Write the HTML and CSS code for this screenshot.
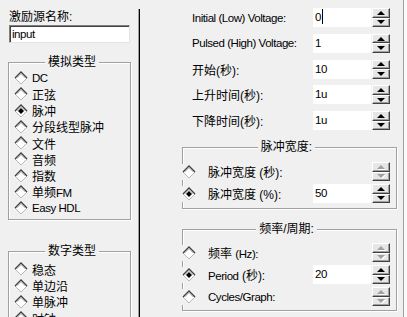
FILE: index.html
```html
<!DOCTYPE html>
<html lang="zh">
<head>
    <meta charset="UTF-8">
    <title>激励源</title>
    <link rel="stylesheet" href="styles.css">
</head>
<body>

    <!-- diamond radio glyphs, reused below -->
    <svg class="defs" width="0" height="0">
        <symbol id="dia" viewBox="0 0 14 14">
            <polygon points="7,1 13,7 7,13 1,7" fill="#fff" stroke="#b8b8b8" stroke-width="1"/>
            <polyline points="1,7 7,1 13,7" fill="none" stroke="#404040" stroke-width="1.4"/>
            <polyline points="2.6,7 7,2.6 11.4,7" fill="none" stroke="#909090" stroke-width="0.8"/>
        </symbol>
        <symbol id="dia-on" viewBox="0 0 14 14">
            <use href="#dia"/>
            <polygon points="7,4 10,7 7,10 4,7" fill="#000"/>
        </symbol>
    </svg>

    <div class="dialog">
        <!-- source type column -->
        <div class="left">
            <div class="name-label">激励源名称:</div>
            <div class="name-input"><span class="en">input</span></div>

            <fieldset class="group analog">
                <legend>模拟类型</legend>
                <div class="radio"><svg class="dia"><use href="#dia"/></svg><span class="en">DC</span></div>
                <div class="radio"><svg class="dia"><use href="#dia"/></svg><span>正弦</span></div>
                <div class="radio"><svg class="dia"><use href="#dia-on"/></svg><span>脉冲</span></div>
                <div class="radio"><svg class="dia"><use href="#dia"/></svg><span>分段线型脉冲</span></div>
                <div class="radio"><svg class="dia"><use href="#dia"/></svg><span>文件</span></div>
                <div class="radio"><svg class="dia"><use href="#dia"/></svg><span>音频</span></div>
                <div class="radio"><svg class="dia"><use href="#dia"/></svg><span>指数</span></div>
                <div class="radio"><svg class="dia"><use href="#dia"/></svg><span>单频<span class="en">FM</span></span></div>
                <div class="radio"><svg class="dia"><use href="#dia"/></svg><span class="en">Easy HDL</span></div>
            </fieldset>

            <fieldset class="group digital">
                <legend>数字类型</legend>
                <div class="radio"><svg class="dia"><use href="#dia"/></svg><span>稳态</span></div>
                <div class="radio"><svg class="dia"><use href="#dia"/></svg><span>单边沿</span></div>
                <div class="radio"><svg class="dia"><use href="#dia"/></svg><span>单脉冲</span></div>
                <div class="radio"><svg class="dia"><use href="#dia"/></svg><span>时钟</span></div>
            </fieldset>
        </div>

        <div class="divider"></div>

        <!-- pulse parameters -->
        <div class="right">
            <div class="params">
                <div class="param">
                    <span class="en">Initial (Low) Voltage:</span>
                    <div class="field"><span class="en">0</span><span class="caret"></span></div>
                    <div class="spin"><i class="up"></i><i class="down"></i></div>
                </div>
                <div class="param">
                    <span class="en">Pulsed (High) Voltage:</span>
                    <div class="field"><span class="en">1</span></div>
                    <div class="spin"><i class="up"></i><i class="down"></i></div>
                </div>
                <div class="param">
                    <span>开始(秒):</span>
                    <div class="field"><span class="en">10</span></div>
                    <div class="spin"><i class="up"></i><i class="down"></i></div>
                </div>
                <div class="param">
                    <span>上升时间(秒):</span>
                    <div class="field"><span class="en">1u</span></div>
                    <div class="spin"><i class="up"></i><i class="down"></i></div>
                </div>
                <div class="param">
                    <span>下降时间(秒):</span>
                    <div class="field"><span class="en">1u</span></div>
                    <div class="spin"><i class="up"></i><i class="down"></i></div>
                </div>
            </div>

            <fieldset class="box pulse">
                <legend>脉冲宽度:</legend>
                <div class="opt">
                    <div class="opt-label"><svg class="dia"><use href="#dia"/></svg><span>脉冲宽度 (秒):</span></div>
                    <div class="field off"></div>
                    <div class="spin off"><i class="up"></i><i class="down"></i></div>
                </div>
                <div class="opt">
                    <div class="opt-label"><svg class="dia"><use href="#dia-on"/></svg><span>脉冲宽度 (%):</span></div>
                    <div class="field"><span class="en">50</span></div>
                    <div class="spin"><i class="up"></i><i class="down"></i></div>
                </div>
            </fieldset>

            <fieldset class="box freq">
                <legend>频率/周期:</legend>
                <div class="opt">
                    <div class="opt-label"><svg class="dia"><use href="#dia"/></svg><span>频率 <span class="en">(Hz):</span></span></div>
                    <div class="field off"></div>
                    <div class="spin off"><i class="up"></i><i class="down"></i></div>
                </div>
                <div class="opt">
                    <div class="opt-label"><svg class="dia"><use href="#dia-on"/></svg><span><span class="en">Period</span> (秒):</span></div>
                    <div class="field"><span class="en">20</span></div>
                    <div class="spin"><i class="up"></i><i class="down"></i></div>
                </div>
                <div class="opt">
                    <div class="opt-label"><svg class="dia"><use href="#dia"/></svg><span class="en">Cycles/Graph:</span></div>
                    <div class="field off"></div>
                    <div class="spin off"><i class="up"></i><i class="down"></i></div>
                </div>
            </fieldset>
        </div>

        <div class="edge"></div>
    </div>

</body>
</html>
```

FILE: styles.css
```css
* {
    box-sizing: border-box;
}

body {
    margin: 0;
    background-color: #f0f0f0;
    font-family: "Liberation Sans", "Noto Sans CJK SC", sans-serif;
    font-size: 12px;
    color: #000;
}

.defs {
    display: block;
    width: 0;
    height: 0;
    overflow: hidden;
}

/* latin text is drawn narrower than the CJK text */
.en {
    font-size: 11.5px;
    letter-spacing: -0.45px;
}

.dialog {
    display: flex;
    width: 407px;
    height: 317px;
    overflow: hidden;
}

/* ---------- left column ---------- */
.left {
    flex: none;
    width: 138px;
    padding: 9px 0 0 8px;
}

.name-label {
    height: 16px;
    line-height: 16px;
    padding-left: 1px;
}

.name-input {
    width: 121px;
    height: 18px;
    margin-left: 1px;
    padding-left: 2px;
    line-height: 16px;
    background-color: #fff;
    border: 1px solid;
    border-color: #808080 #e3e3e3 #e3e3e3 #808080;
    box-shadow: inset 1px 1px 0 #404040;
}

fieldset {
    margin: 0;
    min-inline-size: 0;
    border: 1px solid #a0a0a0;
    box-shadow: inset 1px 1px 0 #fff, 1px 1px 0 #fff;
}

legend {
    margin: 0 auto;
    padding: 0 3px;
    line-height: 14px;
    background-color: #f0f0f0;
}

.group {
    width: 123px;
    padding: 1px 0 3px 5px;
}

.analog {
    margin-top: 12px;
}

.digital {
    margin-top: 24px;
    padding-top: 3px;
}

.radio {
    display: flex;
    align-items: center;
    gap: 4px;
    height: 16.25px;
    white-space: nowrap;
}

.dia {
    flex: none;
    width: 14px;
    height: 14px;
}

.divider {
    flex: none;
    width: 2px;
    margin-top: 9px;
    border-left: 1px solid #a0a0a0;
    border-right: 1px solid #000;
}

/* ---------- right column ---------- */
.right {
    flex: none;
    width: 264px;
    border-right: 1px solid #a0a0a0;
}

.edge {
    flex: 1;
    background-color: #fafafa;
}

.params {
    padding: 8px 0 0 52px;
}

.param {
    display: grid;
    grid-template-columns: 120px 58px 18px;
    column-gap: 1px;
    align-items: center;
    height: 19px;
    margin-bottom: 6.75px;
    white-space: nowrap;
}

.field {
    height: 19px;
    padding-left: 2px;
    line-height: 19px;
    background-color: #fff;
}

.field.off {
    background-color: transparent;
}

.caret {
    display: inline-block;
    width: 1px;
    height: 15px;
    margin-left: 1px;
    vertical-align: -3px;
    background-color: #000;
}

.spin {
    display: flex;
    flex-direction: column;
    width: 18px;
    height: 19px;
}

.spin i {
    flex: 1;
    display: flex;
    align-items: center;
    justify-content: center;
    background-color: #e6e6e6;
    border: 1px solid;
    border-color: #fff #404040 #404040 #fff;
    box-shadow: inset -1px -1px 0 #a0a0a0;
}

.spin i::before {
    content: "";
    border-left: 4px solid transparent;
    border-right: 4px solid transparent;
}

.spin .up::before {
    border-bottom: 4px solid #000;
}

.spin .down::before {
    border-top: 4px solid #000;
}

.spin.off .up::before {
    border-bottom-color: #a0a0a0;
    filter: drop-shadow(1px 1px 0 #fff);
}

.spin.off .down::before {
    border-top-color: #a0a0a0;
    filter: drop-shadow(1px 1px 0 #fff);
}

.box {
    width: 215px;
    margin-left: 42px;
    padding: 8px 6px 5px 0;
}

.pulse {
    margin-top: 10px;
}

.freq {
    margin-top: 13px;
    padding-top: 7px;
    padding-bottom: 4px;
}

.opt {
    display: grid;
    grid-template-columns: 1fr 58px 18px;
    column-gap: 1px;
    align-items: center;
    height: 19px;
    margin: 0 0 3px -1px;
    white-space: nowrap;
}

.opt:last-child {
    margin-bottom: 0;
}

.opt-label {
    display: flex;
    align-items: center;
    gap: 12px;
    width: fit-content;
    height: 16px;
    padding-right: 2px;
    background-color: #f0f0f0;
}
```
